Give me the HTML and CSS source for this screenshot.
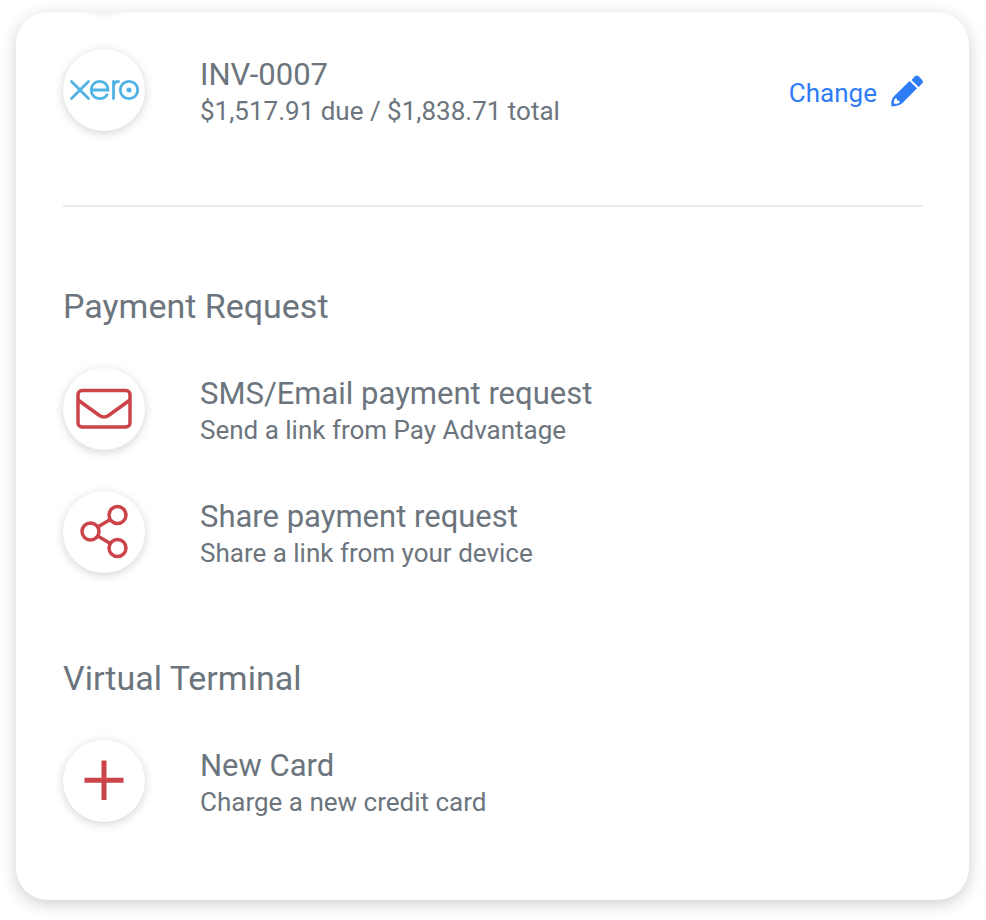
FILE: index.html
```html
<!DOCTYPE html>
<html lang="en">
<head>
<meta charset="utf-8">
<meta name="viewport" content="width=device-width, initial-scale=1">
<title>Take a payment</title>
<link rel="stylesheet" href="styles.css">
</head>
<body>
<main class="card">
  <section class="invoice">
    <div class="row">
      <span class="badge badge-stacked">
        <svg class="icon" viewBox="0 0 82 82" role="img" aria-label="Xero">
          <g class="xero">
            <path d="M8.500 32.500L25.500 49.500M25.500 32.500L8.500 49.500"/>
            <path d="M28.500 41H45C45 36 41.500 32.300 36.600 32.300S28.200 36.200 28.200 41S32 49.700 36.800 49.700C40 49.700 42.500 48.200 44 45.800"/>
            <path d="M50.500 49.500V32.500M50.500 38C50.500 34.500 52.500 32.500 55.500 32.500"/>
            <circle cx="66" cy="41" r="8.700"/>
            <circle class="dot" cx="66" cy="41" r="2.500"/>
          </g>
        </svg>
      </span>
      <div class="text">
        <h2 class="title">INV-0007</h2>
        <p class="detail">$1,517.91 due / $1,838.71 total</p>
      </div>
      <button class="change" type="button">
        <span class="change-label">Change</span>
        <svg class="pencil" viewBox="0 0 32 32" aria-hidden="true">
          <path fill-rule="evenodd" d="M18.500 6L26 13.200L11 28.600C8.800 30.600 4.500 31.200 0.400 31.600C0 27.500 0.500 23.600 3 21.300ZM4.500 23.300C3 24.300 2.800 26.500 3 28.800C5.300 29 7.600 28.600 8.700 27.400L8 25.600L6 25.500L5.800 23.600Z"/>
          <path d="M20.500 5L24 1.300Q25.800 -0.200 27.500 1.300L31.200 5Q32.600 6.700 31.200 8.500L27.600 12Z"/>
        </svg>
      </button>
    </div>
  </section>

  <section class="group">
    <h1 class="heading">Payment Request</h1>
    <a class="row" href="#send">
      <span class="badge">
        <svg class="icon" viewBox="0 0 82 82" aria-hidden="true">
          <g class="line">
            <rect x="15" y="22.500" width="52" height="36.500" rx="4"/>
            <path d="M15 32L36.500 47.500Q41 50.500 45.500 47.500L67 32"/>
          </g>
        </svg>
      </span>
      <span class="text">
        <span class="title">SMS/Email payment request</span>
        <span class="detail">Send a link from Pay Advantage</span>
      </span>
    </a>
    <a class="row" href="#share">
      <span class="badge">
        <svg class="icon" viewBox="0 0 82 82" aria-hidden="true">
          <g class="line">
            <circle cx="27.500" cy="40.500" r="8.500"/>
            <circle cx="54.500" cy="24" r="8.500"/>
            <circle cx="54.500" cy="57" r="8.500"/>
            <path d="M34.700 36L47.300 28.500M34.700 45L47.300 52.500"/>
          </g>
        </svg>
      </span>
      <span class="text">
        <span class="title">Share payment request</span>
        <span class="detail">Share a link from your device</span>
      </span>
    </a>
  </section>

  <section class="group">
    <h1 class="heading">Virtual Terminal</h1>
    <a class="row" href="#card">
      <span class="badge">
        <svg class="icon" viewBox="0 0 82 82" aria-hidden="true">
          <path class="plus" d="M41 20.500V60M21.500 40.300H60.500"/>
        </svg>
      </span>
      <span class="text">
        <span class="title">New Card</span>
        <span class="detail">Charge a new credit card</span>
      </span>
    </a>
  </section>
</main>
</body>
</html>
```

FILE: styles.css
```css
* {
  box-sizing: border-box;
}

body {
  margin: 0;
  padding: 12px 17px 20px 16px;
  background: #fff;
  color: #6c757d;
  font-family: Roboto, "Liberation Sans", sans-serif;
}

.card {
  padding: 17px 46px 57px 47px;
  overflow: hidden;
  border-radius: 32px;
  background: #fff;
  box-shadow: 0 4px 16px rgba(33, 37, 48, 0.22);
}

.invoice {
  padding-bottom: 53px;
  border-bottom: 2px solid #e9ecef;
}

.row {
  display: flex;
  align-items: center;
  gap: 55px;
  padding: 20px 0 21px;
  color: inherit;
  text-decoration: none;
}

.badge {
  position: relative;
  flex: none;
  width: 82px;
  height: 82px;
}

.badge,
.badge-stacked::before {
  border-radius: 50%;
  background: #fff;
  box-shadow: 0 2px 10px rgba(33, 37, 48, 0.2);
}

/* Bottom edge of the entry that is scrolled off above the invoice */
.badge-stacked::before {
  content: "";
  position: absolute;
  top: -122px;
  left: 0;
  width: 82px;
  height: 82px;
}

.icon {
  display: block;
  width: 100%;
  height: 100%;
}

.line,
.plus {
  fill: none;
  stroke: #cb444a;
  stroke-width: 3.5;
}

.plus {
  stroke-width: 5;
}

.xero {
  fill: none;
  stroke: #4fb3e6;
  stroke-width: 2.8;
  stroke-linecap: round;
}

.xero .dot {
  fill: #4fb3e6;
  stroke: none;
}

.text {
  flex: 1;
  padding-top: 6px;
}

.title,
.detail {
  display: block;
  margin: 0;
  font-weight: 400;
}

.title {
  font-size: 31px;
  line-height: 36px;
}

.detail {
  font-size: 26px;
  line-height: 36px;
}

.change {
  display: flex;
  align-items: center;
  gap: 14px;
  padding: 2px 0 0;
  border: 0;
  background: none;
  color: #2f7df6;
  font: inherit;
  font-size: 26px;
  line-height: 36px;
  cursor: pointer;
}

.change-label {
  padding-top: 4px;
}

.pencil {
  width: 32px;
  height: 32px;
  fill: currentColor;
}

.group {
  padding-top: 77px;
}

.group + .group {
  padding-top: 62px;
}

.heading {
  margin: 0 0 20px;
  font-size: 34px;
  font-weight: 400;
  line-height: 44px;
}
```
